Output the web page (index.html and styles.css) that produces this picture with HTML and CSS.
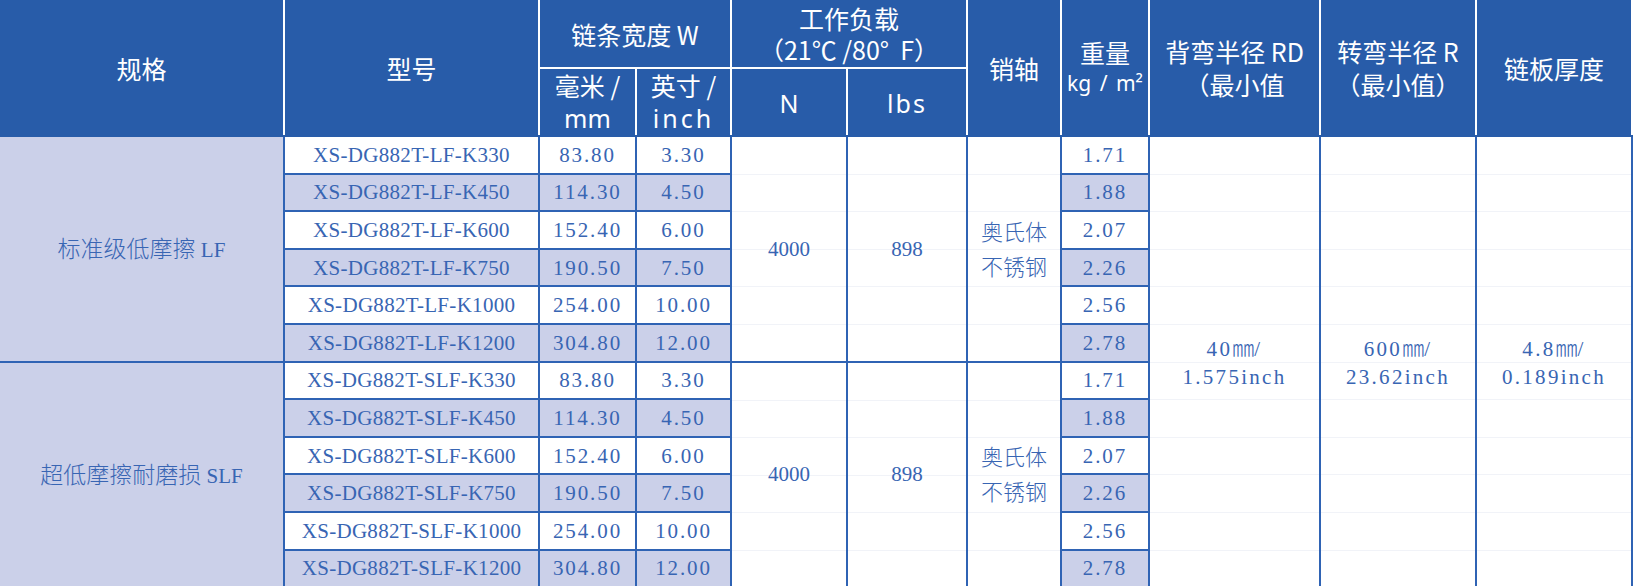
FILE: index.html
```html
<!DOCTYPE html>
<html lang="zh-CN">
<head>
<meta charset="utf-8">
<title>链条规格表</title>
<link rel="stylesheet" href="styles.css">
</head>
<body>
<table class="spec">
  <colgroup>
    <col class="w-spec"><col class="w-model"><col class="w-mm"><col class="w-inch">
    <col class="w-n"><col class="w-lbs"><col class="w-pin"><col class="w-wt">
    <col class="w-rd"><col class="w-r"><col class="w-th">
  </colgroup>
  <thead>
    <tr class="h1">
      <th rowspan="2" class="first bot">规格</th>
      <th rowspan="2" class="bot">型号</th>
      <th colspan="2">链条宽度 W</th>
      <th colspan="2" class="lines31"><div class="ln">工作负载</div><div class="ln">（21℃&nbsp;/80°&nbsp;&nbsp;F）</div></th>
      <th rowspan="2" class="bot">销轴</th>
      <th rowspan="2" class="bot lines31"><div class="ln">重量</div><div class="ln unit">kg / m²</div></th>
      <th rowspan="2" class="bot lines33"><div class="ln">背弯半径 RD</div><div class="ln">（最小值</div></th>
      <th rowspan="2" class="bot lines33"><div class="ln">转弯半径 R</div><div class="ln">（最小值）</div></th>
      <th rowspan="2" class="bot">链板厚度</th>
    </tr>
    <tr class="h2">
      <th class="bot lines33"><div class="ln">毫米 /</div><div class="ln en">mm</div></th>
      <th class="bot lines33"><div class="ln">英寸 /</div><div class="ln en inch">inch</div></th>
      <th class="bot"><span class="en">N</span></th>
      <th class="bot"><span class="en lbs">lbs</span></th>
    </tr>
  </thead>
  <tbody>
    <tr>
      <td rowspan="6" class="spec-cell"><span class="zh">标准级低摩擦</span> LF</td>
      <td class="c code">XS-DG882T-LF-K330</td>
      <td class="c num">83.80</td>
      <td class="c num">3.30</td>
      <td rowspan="6" class="merged">4000</td>
      <td rowspan="6" class="merged">898</td>
      <td rowspan="6" class="merged pin"><span class="zh">奥氏体<br>不锈钢</span></td>
      <td class="c num">1.71</td>
      <td rowspan="12" class="merged big num2">40<span class="zh">㎜</span>/<br>1.575inch</td>
      <td rowspan="12" class="merged big num2">600<span class="zh">㎜</span>/<br>23.62inch</td>
      <td rowspan="12" class="merged big num2 last">4.8<span class="zh">㎜</span>/<br>0.189inch</td>
    </tr>
    <tr class="alt">
      <td class="c code">XS-DG882T-LF-K450</td>
      <td class="c num">114.30</td>
      <td class="c num">4.50</td>
      <td class="c num">1.88</td>
    </tr>
    <tr>
      <td class="c code">XS-DG882T-LF-K600</td>
      <td class="c num">152.40</td>
      <td class="c num">6.00</td>
      <td class="c num">2.07</td>
    </tr>
    <tr class="alt">
      <td class="c code">XS-DG882T-LF-K750</td>
      <td class="c num">190.50</td>
      <td class="c num">7.50</td>
      <td class="c num">2.26</td>
    </tr>
    <tr>
      <td class="c code">XS-DG882T-LF-K1000</td>
      <td class="c num">254.00</td>
      <td class="c num">10.00</td>
      <td class="c num">2.56</td>
    </tr>
    <tr class="alt">
      <td class="c code">XS-DG882T-LF-K1200</td>
      <td class="c num">304.80</td>
      <td class="c num">12.00</td>
      <td class="c num">2.78</td>
    </tr>
    <tr>
      <td rowspan="6" class="spec-cell"><span class="zh">超低摩擦耐磨损</span> SLF</td>
      <td class="c code">XS-DG882T-SLF-K330</td>
      <td class="c num">83.80</td>
      <td class="c num">3.30</td>
      <td rowspan="6" class="merged">4000</td>
      <td rowspan="6" class="merged">898</td>
      <td rowspan="6" class="merged pin"><span class="zh">奥氏体<br>不锈钢</span></td>
      <td class="c num">1.71</td>
    </tr>
    <tr class="alt">
      <td class="c code">XS-DG882T-SLF-K450</td>
      <td class="c num">114.30</td>
      <td class="c num">4.50</td>
      <td class="c num">1.88</td>
    </tr>
    <tr>
      <td class="c code">XS-DG882T-SLF-K600</td>
      <td class="c num">152.40</td>
      <td class="c num">6.00</td>
      <td class="c num">2.07</td>
    </tr>
    <tr class="alt">
      <td class="c code">XS-DG882T-SLF-K750</td>
      <td class="c num">190.50</td>
      <td class="c num">7.50</td>
      <td class="c num">2.26</td>
    </tr>
    <tr>
      <td class="c code">XS-DG882T-SLF-K1000</td>
      <td class="c num">254.00</td>
      <td class="c num">10.00</td>
      <td class="c num">2.56</td>
    </tr>
    <tr class="alt">
      <td class="c code">XS-DG882T-SLF-K1200</td>
      <td class="c num">304.80</td>
      <td class="c num">12.00</td>
      <td class="c num">2.78</td>
    </tr>
  </tbody>
</table>
</body>
</html>
```

FILE: styles.css
```css
html, body {
  margin: 0;
  padding: 0;
  background: #ffffff;
}

.spec {
  border-collapse: collapse;
  table-layout: fixed;
  width: 1633px;
}

.w-spec { width: 284px; }
.w-model { width: 255px; }
.w-mm { width: 97px; }
.w-inch { width: 95px; }
.w-n { width: 116px; }
.w-lbs { width: 120px; }
.w-pin { width: 94px; }
.w-wt { width: 88px; }
.w-rd { width: 171px; }
.w-r { width: 156px; }
.w-th { width: 156px; }

/* header */
.spec th {
  background: #285ca9;
  color: #ffffff;
  font-family: "Noto Sans CJK SC", "Noto Sans", sans-serif;
  font-weight: 400;
  font-size: 25px;
  line-height: 30px;
  border: 2px solid #ffffff;
  padding: 0;
  text-align: center;
  vertical-align: middle;
  white-space: nowrap;
}

.spec .h1 th { border-top: none; }
.spec th.first { border-left: none; }
.spec th.bot { border-bottom-color: #285ca9; }

.spec .h1 { height: 68px; }
.spec .h2 { height: 66px; }

.spec th.lines31 .ln { height: 31px; line-height: 31px; }
.spec th.lines33 .ln { height: 33px; line-height: 33px; }

.spec .unit {
  font-family: "Noto Sans", "Noto Sans CJK SC", sans-serif;
  font-weight: 400;
  font-size: 21px;
  word-spacing: 3px;
}

.spec .en {
  font-family: "Noto Sans", "Noto Sans CJK SC", sans-serif;
  font-weight: 400;
}

.spec .inch { letter-spacing: 3px; }
.spec .lbs { letter-spacing: 2px; }

/* body */
.spec td {
  border: 2px solid #2f63b4;
  color: #3865b3;
  font-family: "Liberation Serif", "Noto Sans CJK SC", serif;
  font-size: 21px;
  line-height: 26px;
  padding: 0;
  text-align: center;
  vertical-align: middle;
  white-space: nowrap;
  background: #ffffff;
}

.spec tbody tr { height: 37.6px; }

.spec td.spec-cell {
  background: #cbd0e9;
  border-left: none;
}

.spec td.spec-cell .zh { font-size: 23px; }

.spec tr.alt td.c { background: #cbd0e9; }

.spec td.merged {
  background-color: #ffffff;
  background-image: repeating-linear-gradient(
    to bottom,
    transparent 0,
    transparent 36.6px,
    #f1f3f8 36.6px,
    #f1f3f8 37.6px
  );
}

.spec .zh {
  font-family: "Noto Sans CJK SC", sans-serif;
  font-weight: 300;
  font-size: 22px;
}

.spec td.pin { line-height: 32px; }

.spec td.code { letter-spacing: 0.3px; }
.spec td.num { letter-spacing: 1.9px; }
.spec td.num2 { letter-spacing: 2.3px; line-height: 28px; }
.spec td.num2 .zh { letter-spacing: 0; }

.spec td.last { border-right: 2px solid #2f63b4; }
```
